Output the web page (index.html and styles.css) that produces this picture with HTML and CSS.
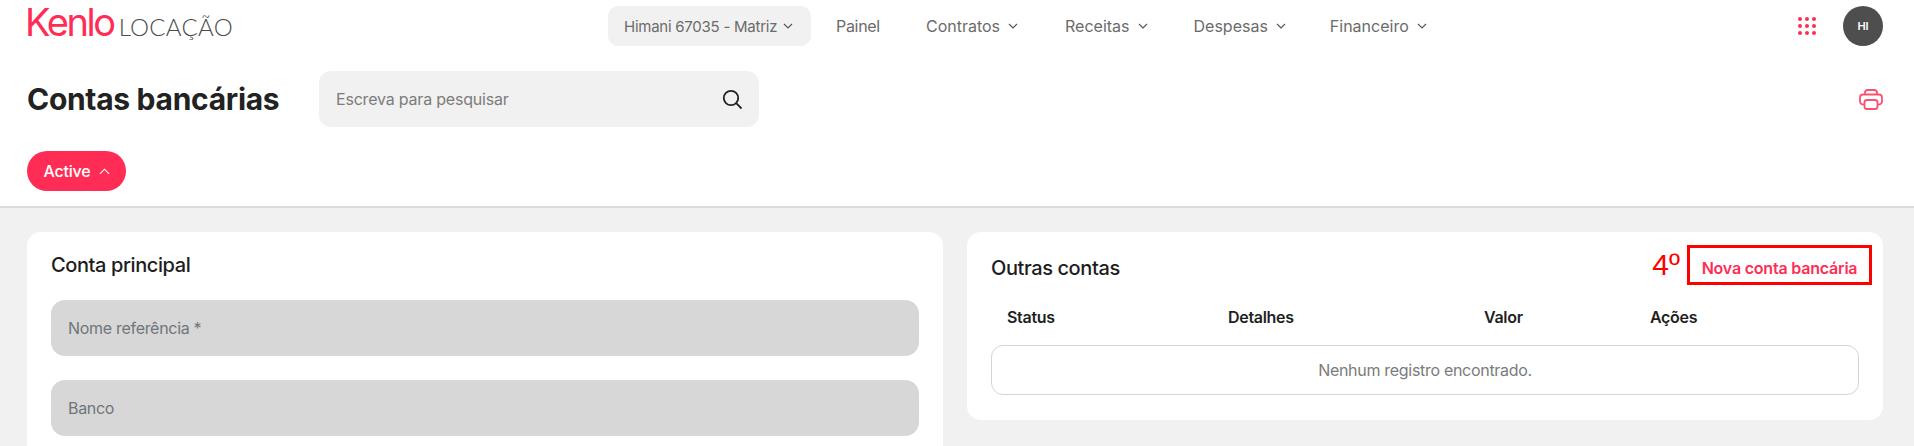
FILE: index.html
```html
<!DOCTYPE html>
<html lang="pt-BR">
<head>
<meta charset="utf-8">
<title>Contas bancárias</title>
<link rel="stylesheet" href="styles.css">
</head>
<body>
<header class="top">
  <div class="topbar">
    <div class="logo"><span class="logo-mark">Kenlo</span><span class="logo-sub">LOCAÇÃO</span></div>
    <nav class="nav">
      <a class="nav-pill">Himani 67035 - Matriz <svg class="chev" viewBox="0 0 10 6"><path d="M1 1l4 4 4-4"/></svg></a>
      <a class="nav-item nav-painel">Painel</a>
      <a class="nav-item nav-contratos">Contratos <svg class="chev" viewBox="0 0 10 6"><path d="M1 1l4 4 4-4"/></svg></a>
      <a class="nav-item nav-receitas">Receitas <svg class="chev" viewBox="0 0 10 6"><path d="M1 1l4 4 4-4"/></svg></a>
      <a class="nav-item nav-despesas">Despesas <svg class="chev" viewBox="0 0 10 6"><path d="M1 1l4 4 4-4"/></svg></a>
      <a class="nav-item nav-financeiro">Financeiro <svg class="chev" viewBox="0 0 10 6"><path d="M1 1l4 4 4-4"/></svg></a>
    </nav>
    <div class="top-right">
      <svg class="apps" viewBox="0 0 18 18"><g><circle cx="2" cy="2" r="2"/><circle cx="9" cy="2" r="2"/><circle cx="16" cy="2" r="2"/><circle cx="2" cy="9" r="2"/><circle cx="9" cy="9" r="2"/><circle cx="16" cy="9" r="2"/><circle cx="2" cy="16" r="2"/><circle cx="9" cy="16" r="2"/><circle cx="16" cy="16" r="2"/></g></svg>
      <div class="avatar">HI</div>
    </div>
  </div>
  <div class="title-row">
    <h1 class="title">Contas bancárias</h1>
    <div class="search">
      <span class="search-ph">Escreva para pesquisar</span>
      <svg class="search-icon" viewBox="0 0 22 22"><circle cx="10" cy="10" r="7.2"/><path d="M15.2 15.2l5.3 5.3"/></svg>
    </div>
    <svg class="printer" viewBox="0 0 24 21"><path d="M6 5.5V3.5A2.5 2.5 0 0 1 8.500 1h7A2.500 2.500 0 0 1 18 3.500v2"/><path d="M5.500 15.500H4A3 3 0 0 1 1 12.500V8.500a3 3 0 0 1 3-3h16a3 3 0 0 1 3 3v4a3 3 0 0 1-3 3h-1.500"/><rect x="5.500" y="11" width="13" height="9" rx="2.500"/></svg>
  </div>
  <div class="filter-row">
    <button class="active-btn">Active <svg class="chev-up" viewBox="0 0 12 7"><path d="M1 6l5-5 5 5"/></svg></button>
  </div>
</header>
<main class="main">
  <section class="card card-left">
    <h2 class="card-title">Conta principal</h2>
    <div class="field">Nome referência *</div>
    <div class="field">Banco</div>
  </section>
  <section class="card card-right">
    <div class="card-head">
      <h2 class="card-title-b">Outras contas</h2>
      <div class="head-actions">
        <span class="step">4º</span>
        <button class="new-btn">Nova conta bancária</button>
      </div>
    </div>
    <div class="thead"><span>Status</span><span>Detalhes</span><span>Valor</span><span>Ações</span></div>
    <div class="empty">Nenhum registro encontrado.</div>
  </section>
</main>
</body>
</html>
```
FILE: styles.css
```css
* { box-sizing: border-box; }
html, body { margin: 0; padding: 0; height: 446px; overflow: hidden; }
body { background: #f1f1f1; font-family: Inter, "Noto Sans", sans-serif; color: #1f1f1f; }
h1, h2 { margin: 0; }

.top { background: #fff; height: 208px; border-bottom: 2px solid #dcdcdc; padding: 6px 31px 0 27px; }
.topbar { display: flex; align-items: center; height: 40px; }

.logo { display: flex; align-items: baseline; width: 581px; height: 40px; margin-top: -8px; }
.logo-mark { font-family: Inter, sans-serif; font-size: 38px; line-height: 40px; font-weight: 400; letter-spacing: -2.4px; color: #ff2d55; margin-left: -2px; margin-right: 5px; }
.logo-sub { font-family: Lato, sans-serif; font-size: 24px; line-height: 40px; font-weight: 300; letter-spacing: 0.3px; color: #4c4c4c; }

.nav { display: flex; align-items: center; font-size: 16px; color: #6b6b6b; }
.nav-pill { display: flex; align-items: center; gap: 6px; height: 40px; width: 203px; padding-left: 16px; background: #f1f1f1; border-radius: 10px; white-space: nowrap; font-size: 15px; letter-spacing: -0.25px; }
.nav-item { display: flex; align-items: center; gap: 8px; white-space: nowrap; letter-spacing: 0; }
.nav-painel { margin-left: 25px; letter-spacing: -0.3px; }
.nav-contratos { margin-left: 46px; }
.nav-receitas { margin-left: 47px; }
.nav-despesas { margin-left: 46px; }
.nav-financeiro { margin-left: 44px; }
.chev { width: 10px; height: 6px; fill: none; stroke: #555; stroke-width: 1.1; }

.top-right { margin-left: auto; display: flex; align-items: center; gap: 27px; }
.apps { width: 18px; height: 18px; fill: #ff2d55; }
.avatar { width: 40px; height: 40px; border-radius: 50%; background: #4e4e4e; color: #fff; font-size: 11px; font-weight: 600; display: flex; align-items: center; justify-content: center; }

.title-row { display: flex; align-items: center; height: 56px; margin-top: 25px; }
.title { font-size: 30px; font-weight: 650; letter-spacing: -0.3px; color: #222; width: 292px; white-space: nowrap; }
.search { width: 440px; height: 56px; background: #f1f1f1; border-radius: 12px; display: flex; align-items: center; justify-content: space-between; padding: 0 16px 0 17px; }
.search-ph { font-size: 16px; color: #7c7c7c; letter-spacing: -0.2px; }
.search-icon { width: 22px; height: 22px; fill: none; stroke: #222; stroke-width: 1.800; }
.printer { margin-left: auto; width: 24px; height: 21px; fill: none; stroke: #ff4f70; stroke-width: 1.800; }

.filter-row { margin-top: 24px; }
.active-btn { height: 40px; width: 99px; border: 0; border-radius: 20px; background: #ff2d55; color: #fff; font: 500 16px Inter, sans-serif; letter-spacing: -0.2px; display: flex; align-items: center; justify-content: center; gap: 8px; padding: 0; }
.chev-up { width: 11px; height: 7px; fill: none; stroke: #fff; stroke-width: 1.200; }

.main { display: grid; grid-template-columns: 916px 916px; gap: 24px; height: 238px; overflow: hidden; padding: 24px 31px 0 27px; align-items: start; }
.card { background: #fff; border-radius: 14px; }
.card-left { padding: 20px 24px 24px; height: 300px; }
.card-title { font-size: 20px; line-height: 26px; font-weight: 500; letter-spacing: -0.4px; color: #1d1d1d; margin-bottom: 22px; }
.field { height: 56px; background: #d7d7d7; border-radius: 14px; margin-bottom: 24px; padding: 0 17px; display: flex; align-items: center; font-size: 16px; letter-spacing: -0.3px; color: #6f757b; }

.card-right { height: 188px; padding: 13px 24px 0 24px; }
.card-head { display: flex; align-items: center; justify-content: space-between; height: 40px; }
.card-title-b { font-size: 20px; font-weight: 500; letter-spacing: -0.4px; color: #1d1d1d; margin-top: 5px; }
.head-actions { display: flex; align-items: center; gap: 7px; margin-right: -13px; }
.step { font-family: "Liberation Sans", sans-serif; font-size: 30px; font-weight: 400; line-height: 40px; color: #f00; }
.new-btn { width: 185px; height: 40px; border: 3px solid #f00; background: #fff; color: #ff2d55; font: 600 16px Inter, sans-serif; letter-spacing: -0.2px; padding: 6px 0 0; white-space: nowrap; }
.thead { display: grid; grid-template-columns: 221px 256px 166px 1fr; padding: 0 16px; margin-top: 22px; height: 38px; font-size: 16px; font-weight: 600; letter-spacing: -0.3px; color: #1f1f1f; }
.empty { height: 50px; border: 1px solid #d5d5d5; border-radius: 12px; display: flex; align-items: center; justify-content: center; font-size: 16px; letter-spacing: -0.3px; color: #7b7b7b; }
```
